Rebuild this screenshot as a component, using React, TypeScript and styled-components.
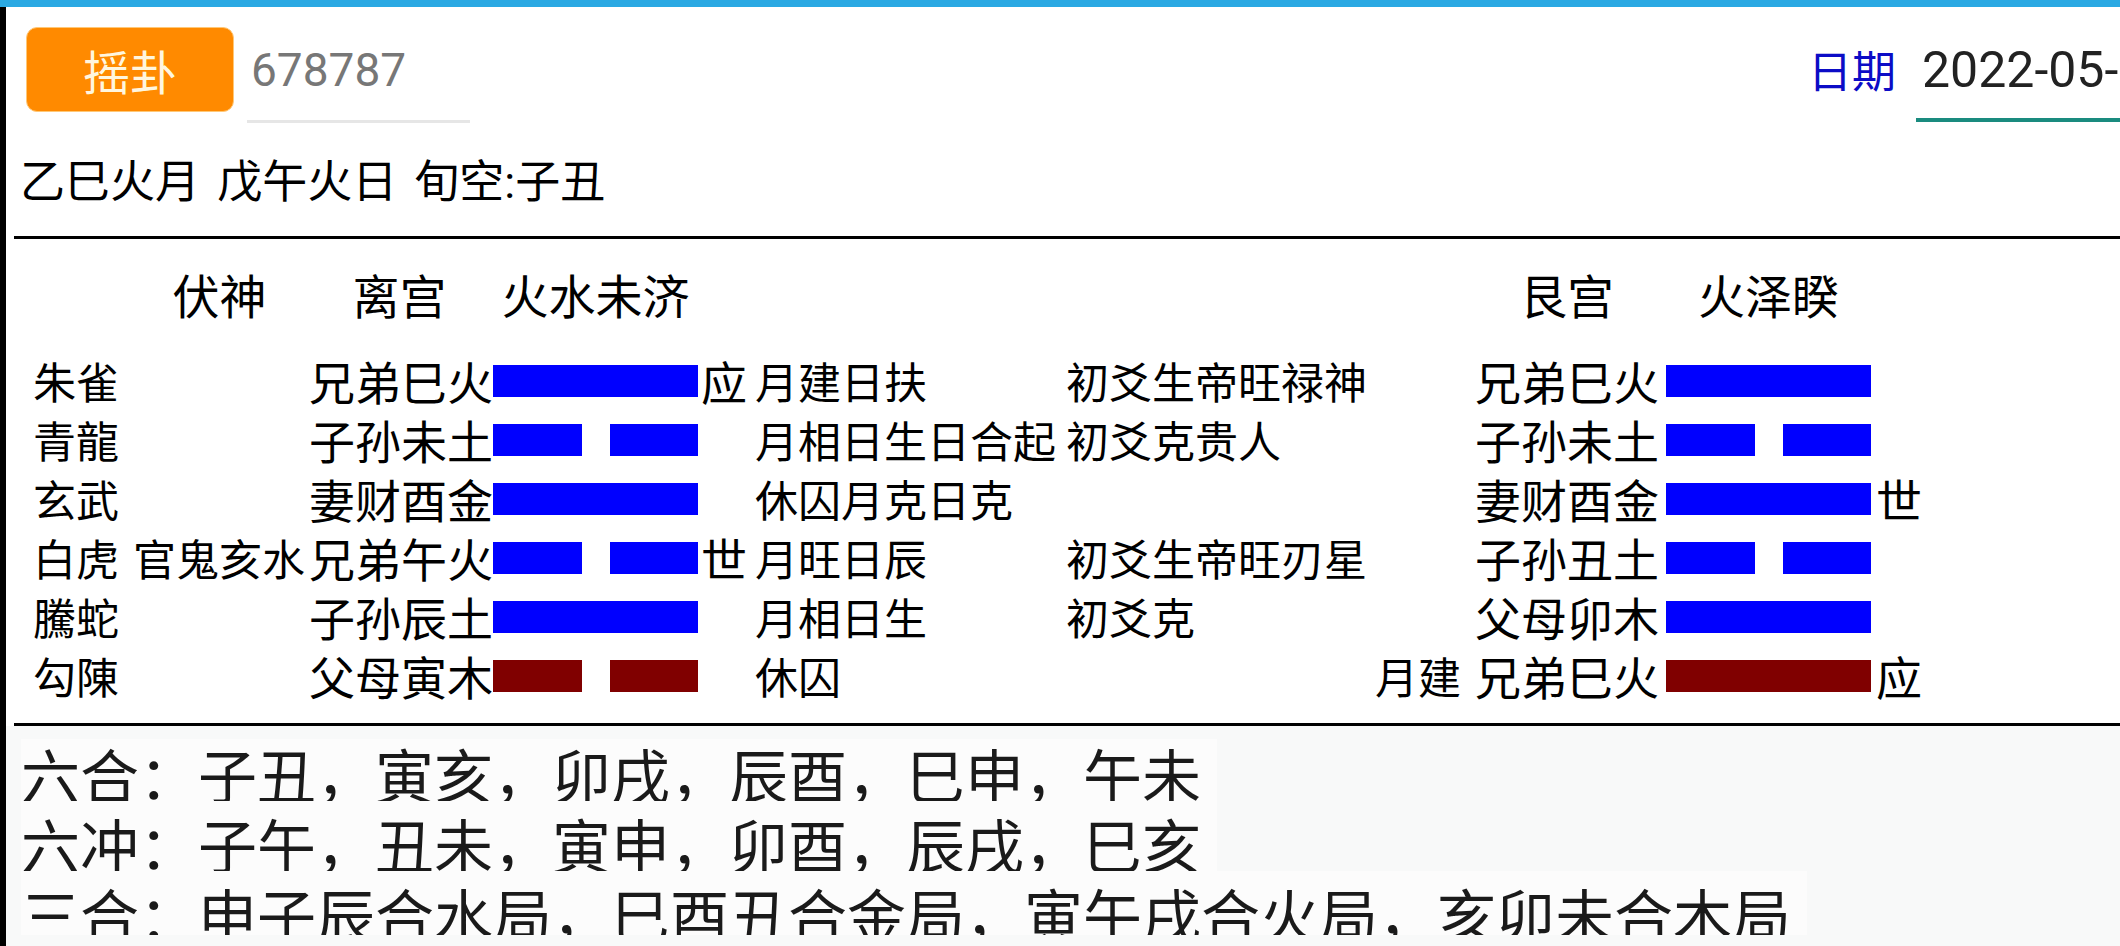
import React from "react";
import styled, { createGlobalStyle } from "styled-components";

const GlobalStyle = createGlobalStyle`
  html, body { margin: 0; padding: 0; background: #ffffff; }
  body { font-family: "Noto Sans CJK SC", "Noto Sans", sans-serif; color: #000; }
`;

const CJK = `"Noto Sans CJK SC", "Noto Sans", sans-serif`;
const LATIN = `Roboto, "Noto Sans CJK SC", sans-serif`;
const COLS = "100px 173px 187px 205px 54px 314px 304px 105px 184px 7px 205px 59px 1fr";

const Page = styled.div`
  width: 2120px;
  height: 946px;
  overflow: hidden;
  box-sizing: border-box;
  border-top: 7px solid #2aa9e3;
  display: flex;
  flex-direction: column;
  background: #fff;
`;

const Body = styled.div`
  flex: 1;
  border-left: 6px solid #000;
  display: flex;
  flex-direction: column;
  min-height: 0;
`;

const Toolbar = styled.div`
  display: flex;
  align-items: flex-start;
  padding: 20px 0 0 20px;
`;

const ShakeButton = styled.button`
  width: 208px;
  height: 85px;
  border: 1px solid #ffc877;
  border-radius: 11px;
  background: #ff8a00;
  color: #fff6df;
  font-family: ${CJK};
  font-size: 47px;
  line-height: 1;
  padding: 0;
  display: flex;
  align-items: center;
  justify-content: center;
  box-sizing: border-box;
`;

const CodeField = styled.div`
  box-sizing: border-box;
  width: 223px;
  height: 96px;
  margin-left: 13px;
  padding-left: 4px;
  border-bottom: 3px solid #e6e6e6;
  font-family: ${LATIN};
  font-size: 46px;
  line-height: 86px;
  color: #777;
`;

const Spacer = styled.div`
  flex: 1;
`;

const DateLabel = styled.div`
  font-family: ${CJK};
  font-size: 44px;
  line-height: 85px;
  color: #0c0cc6;
`;

const DateField = styled.div`
  box-sizing: border-box;
  width: 204px;
  height: 95px;
  margin-left: 20px;
  padding-left: 6px;
  border-bottom: 4px solid #1a8b7f;
  font-family: ${LATIN};
  font-size: 50px;
  line-height: 86px;
  color: #222;
  white-space: nowrap;
  overflow: hidden;
`;

const InfoLine = styled.div`
  margin-top: 30px;
  padding-left: 14px;
  font-family: ${LATIN};
  font-size: 45px;
  line-height: 60px;
  word-spacing: 6px;
  white-space: nowrap;
`;

const Rule = styled.div<{ $top: number }>`
  margin-top: ${(p) => p.$top}px;
  margin-left: 8px;
  height: 3px;
  background: #000;
  flex-shrink: 0;
`;

const Table = styled.div`
  padding-left: 27px;
  display: flex;
  flex-direction: column;
`;

const HeadRow = styled.div`
  display: grid;
  grid-template-columns: ${COLS};
  margin-top: 25px;
  height: 60px;
  align-items: center;
  font-family: ${CJK};
  font-size: 47px;
  line-height: 60px;
`;

const HeadCell = styled.div<{ $col: number }>`
  grid-column: ${(p) => p.$col};
  text-align: center;
  white-space: nowrap;
`;

const Rows = styled.div`
  margin-top: 27px;
  display: flex;
  flex-direction: column;
`;

const HexRow = styled.div`
  display: grid;
  grid-template-columns: ${COLS};
  height: 59px;
  align-items: center;
  font-family: ${CJK};
  font-size: 43px;
  line-height: 59px;
  white-space: nowrap;
`;

const Cell = styled.div<{ $align?: "left" | "right"; $pad?: number; $big?: boolean }>`
  text-align: ${(p) => p.$align || "left"};
  padding-left: ${(p) => (p.$align === "right" ? 0 : p.$pad || 0)}px;
  padding-right: ${(p) => (p.$align === "right" ? p.$pad || 0 : 0)}px;
  font-size: ${(p) => (p.$big ? 46 : 43)}px;
  overflow: visible;
`;

const Bar = styled.div`
  display: flex;
  gap: 28px;
  height: 32px;
`;

const Segment = styled.div<{ $moving: boolean }>`
  flex: 1;
  background: ${(p) => (p.$moving ? "#800000" : "#0000ff")};
`;

const Footer = styled.div`
  flex: 1;
  background: #f8f9f9;
  padding-top: 13px;
  min-height: 0;
`;

const FooterClip = styled.div`
  height: 196px;
  overflow: hidden;
  padding-left: 15px;
`;

const FooterLine = styled.div`
  font-family: ${CJK};
  font-size: 59px;
  line-height: 70px;
  height: 70px;
  color: #1a1a1a;
  white-space: nowrap;
`;

const FooterText = styled.span`
  background: #fcfcfc;
  padding-right: 16px;
`;

type Line = "yang" | "yin";

interface RowData {
  spirit: string;
  fu: string;
  lq: string;
  line: Line;
  moving: boolean;
  mark: string;
  status: string;
  extra: string;
  rfu: string;
  rlq: string;
  rline: Line;
  rmoving: boolean;
  rmark: string;
}

const rows: RowData[] = [
  { spirit: "朱雀", fu: "", lq: "兄弟巳火", line: "yang", moving: false, mark: "应", status: "月建日扶", extra: "初爻生帝旺禄神", rfu: "", rlq: "兄弟巳火", rline: "yang", rmoving: false, rmark: "" },
  { spirit: "青龍", fu: "", lq: "子孙未土", line: "yin", moving: false, mark: "", status: "月相日生日合起", extra: "初爻克贵人", rfu: "", rlq: "子孙未土", rline: "yin", rmoving: false, rmark: "" },
  { spirit: "玄武", fu: "", lq: "妻财酉金", line: "yang", moving: false, mark: "", status: "休囚月克日克", extra: "", rfu: "", rlq: "妻财酉金", rline: "yang", rmoving: false, rmark: "世" },
  { spirit: "白虎", fu: "官鬼亥水", lq: "兄弟午火", line: "yin", moving: false, mark: "世", status: "月旺日辰", extra: "初爻生帝旺刃星", rfu: "", rlq: "子孙丑土", rline: "yin", rmoving: false, rmark: "" },
  { spirit: "騰蛇", fu: "", lq: "子孙辰土", line: "yang", moving: false, mark: "", status: "月相日生", extra: "初爻克", rfu: "", rlq: "父母卯木", rline: "yang", rmoving: false, rmark: "" },
  { spirit: "勾陳", fu: "", lq: "父母寅木", line: "yin", moving: true, mark: "", status: "休囚", extra: "", rfu: "月建", rlq: "兄弟巳火", rline: "yang", rmoving: true, rmark: "应" },
];

const YaoBar: React.FC<{ line: Line; moving: boolean }> = ({ line, moving }) => (
  <Bar>
    <Segment $moving={moving} />
    {line === "yin" && <Segment $moving={moving} />}
  </Bar>
);

const footerLines = [
  "六合：子丑，寅亥，卯戌，辰酉，巳申，午未",
  "六冲：子午，丑未，寅申，卯酉，辰戌，巳亥",
  "三合：申子辰合水局，巳酉丑合金局，寅午戌合火局，亥卯未合木局",
];

export default function App() {
  return (
    <>
      <GlobalStyle />
      <Page>
        <Body>
          <Toolbar>
            <ShakeButton>摇卦</ShakeButton>
            <CodeField>678787</CodeField>
            <Spacer />
            <DateLabel>日期</DateLabel>
            <DateField>2022-05-05 10:30</DateField>
          </Toolbar>
          <InfoLine>乙巳火月 戊午火日 旬空:子丑</InfoLine>
          <Rule $top={23} />
          <Table>
            <HeadRow>
              <HeadCell $col={2}>伏神</HeadCell>
              <HeadCell $col={3}>离宫</HeadCell>
              <HeadCell $col={4}>火水未济</HeadCell>
              <HeadCell $col={9}>艮宫</HeadCell>
              <HeadCell $col={11}>火泽睽</HeadCell>
            </HeadRow>
            <Rows>
              {rows.map((r, i) => (
                <HexRow key={i}>
                  <Cell>{r.spirit}</Cell>
                  <Cell>{r.fu}</Cell>
                  <Cell $align="right" $big>{r.lq}</Cell>
                  <YaoBar line={r.line} moving={r.moving} />
                  <Cell $pad={3} $big>{r.mark}</Cell>
                  <Cell $pad={3}>{r.status}</Cell>
                  <Cell>{r.extra}</Cell>
                  <Cell $align="right" $pad={14}>{r.rfu}</Cell>
                  <Cell $align="right" $big>{r.rlq}</Cell>
                  <Cell />
                  <YaoBar line={r.rline} moving={r.rmoving} />
                  <Cell $pad={5} $big>{r.rmark}</Cell>
                </HexRow>
              ))}
            </Rows>
          </Table>
          <Rule $top={18} />
          <Footer>
            <FooterClip>
              {footerLines.map((t) => (
                <FooterLine key={t}>
                  <FooterText>{t}</FooterText>
                </FooterLine>
              ))}
            </FooterClip>
          </Footer>
        </Body>
      </Page>
    </>
  );
}
